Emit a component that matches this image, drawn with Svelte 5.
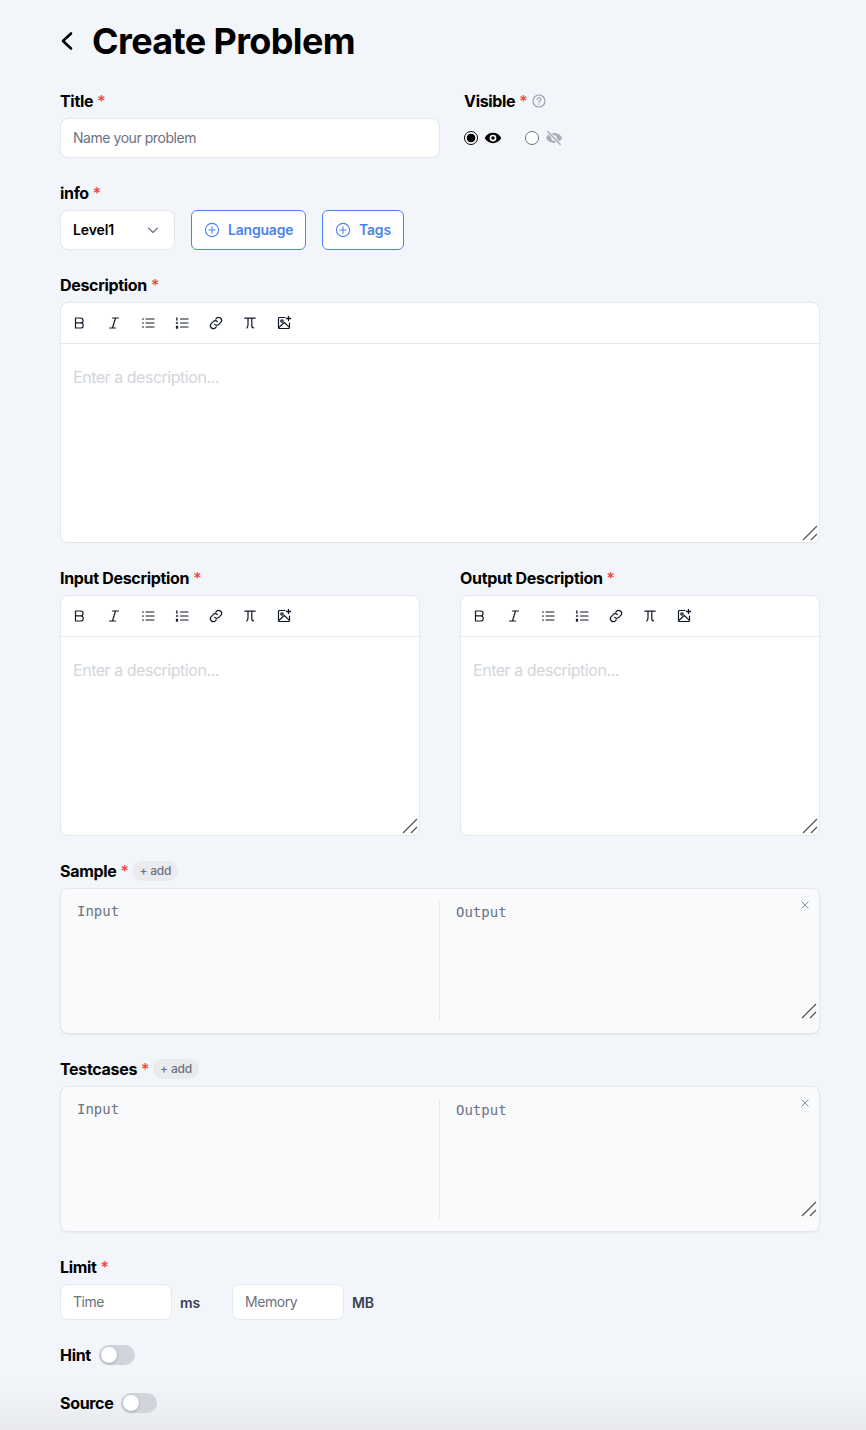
<script>
  const tools = ['b', 'i', 'ul', 'ol', 'link', 'pi', 'img'];
</script>

{#snippet req()}<span class="req">*</span>{/snippet}

{#snippet grip(cls)}
  <svg class="grip {cls}" width="16" height="16" viewBox="0 0 16 16" aria-hidden="true">
    <path d="M1 15 15 1M9 15l6-6" fill="none" stroke="#555" stroke-width="1.3" />
  </svg>
{/snippet}

{#snippet tool(kind)}
  <button class="tool" type="button" aria-label={kind}>
    <svg width="16" height="16" viewBox="0 0 16 16" fill="none" stroke="#111827" stroke-width="1.2" stroke-linecap="round" stroke-linejoin="round">
      {#if kind === 'b'}
        <path d="M3.500 3h5.100a2.400 2.400 0 0 1 0 4.900H3.500zM3.500 7.900h5.700a2.600 2.600 0 0 1 0 5.100H3.500z" />
      {:else if kind === 'i'}
        <path d="M6.500 3h6M3.500 13h6M9.600 3 6.400 13" />
      {:else if kind === 'ul'}
        <path d="M6 4h8M6 8h8M6 12h8" />
        <path d="M2.500 4h1M2.500 8h1M2.500 12h1" />
      {:else if kind === 'ol'}
        <path d="M6.500 4H14M6.500 8H14M6.500 12H14" />
        <path d="M2.900 3v2.200M2.400 8h1.200M2.400 11.500h1.200M2.400 13h1.200" stroke-width="1.300" />
      {:else if kind === 'link'}
        <path d="M6.600 9.400a2.900 2.900 0 0 0 4.200 0l2.200-2.200A3 3 0 0 0 8.800 3l-1 1" />
        <path d="M9.400 6.600a2.900 2.900 0 0 0-4.200 0L3 8.800A3 3 0 0 0 7.200 13l1-1" />
      {:else if kind === 'pi'}
        <path d="M2.800 3.200h10.400M6 3.200v6.200c0 1.800-.4 3-1.200 3.600M9.800 3.200v7.600c0 1.300.6 2 1.800 2" />
      {:else}
        <path d="M9 2.500H3.500a1 1 0 0 0-1 1v9a1 1 0 0 0 1 1h9a1 1 0 0 0 1-1V8" />
        <circle cx="6" cy="6" r="1.200" />
        <path d="m2.800 12.500 5.500-5 4.900 4.600" />
        <path d="M12.500 1.500v4M10.500 3.500h4" stroke-width="1.300" />
      {/if}
    </svg>
  </button>
{/snippet}

{#snippet editor()}
  <div class="editor">
    <div class="toolbar">
      {#each tools as t}{@render tool(t)}{/each}
    </div>
    <div class="editor-body">Enter a description...</div>
    {@render grip('grip-editor')}
  </div>
{/snippet}

{#snippet pair()}
  <div class="pair">
    <textarea class="pair-in" placeholder="Input"></textarea>
    <textarea class="pair-out" placeholder="Output"></textarea>
    <svg class="close" width="10" height="10" viewBox="0 0 10 10" aria-hidden="true">
      <path d="M1.500 1.500l7 7M8.500 1.500l-7 7" stroke="#8b919c" stroke-width="1" fill="none" />
    </svg>
    {@render grip('grip-pair')}
  </div>
{/snippet}

{#snippet plus()}
  <svg width="16" height="16" viewBox="0 0 16 16" fill="none" stroke="#4c82f0" stroke-width="1.100" stroke-linecap="round">
    <circle cx="8" cy="8" r="6.600" /><path d="M8 4.800v6.400M4.800 8h6.400" />
  </svg>
{/snippet}

<main class="page">
  <header class="head">
    <svg class="back" width="16" height="24" viewBox="0 0 16 24" fill="none" stroke="#000" stroke-width="2.600" stroke-linecap="round" stroke-linejoin="round">
      <path d="M12 4.500 4 12l8 7.500" />
    </svg>
    <h1>Create Problem</h1>
  </header>

  <div class="row-title">
    <div class="field title-field">
      <span class="label">Title {@render req()}</span>
      <input class="input wide" placeholder="Name your problem" />
    </div>
    <div class="field">
      <span class="label">Visible {@render req()}
        <svg class="help" width="14" height="14" viewBox="0 0 14 14" fill="none" stroke="#9ca3af" stroke-width="1.200" stroke-linecap="round">
          <circle cx="7" cy="7" r="6" />
          <path d="M5.300 5.500a1.750 1.750 0 1 1 2.600 1.500c-.6.350-.9.700-.9 1.300" />
          <path d="M7 10.200v.1" />
        </svg>
      </span>
      <div class="radios">
        <span class="radio on"></span>
        <svg class="eye" width="18" height="18" viewBox="0 0 16 16">
          <path d="M.6 8C2.200 5 4.900 3.400 8 3.400S13.800 5 15.400 8c-1.600 3-4.300 4.600-7.400 4.600S2.200 11 .6 8z" fill="#000" />
          <circle cx="8" cy="8" r="3" fill="#fff" /><circle cx="8" cy="8" r="1.600" fill="#000" />
        </svg>
        <span class="radio off"></span>
        <svg class="eye" width="18" height="18" viewBox="0 0 16 16" fill="none">
          <path d="M.8 8C2.300 5.200 4.900 3.600 8 3.600S13.700 5.200 15.200 8c-1.500 2.800-4.100 4.400-7.200 4.400S2.300 10.800.8 8z" fill="#a9aeb8" />
          <circle cx="8" cy="8" r="2.400" fill="#f2f5fa" />
          <path d="M2.500 2.200 13.500 13.800" stroke="#f2f5fa" stroke-width="2.800" />
          <path d="M2.500 2.200 13.500 13.800" stroke="#a9aeb8" stroke-width="1.300" stroke-linecap="round" />
        </svg>
      </div>
    </div>
  </div>

  <div class="field">
    <span class="label">info {@render req()}</span>
    <div class="info-row">
      <div class="select">
        <span>Level1</span>
        <svg width="12" height="12" viewBox="0 0 12 12" fill="none" stroke="#6b7280" stroke-width="1.100" stroke-linecap="round" stroke-linejoin="round"><path d="M1.500 4 6 8.500 10.500 4" /></svg>
      </div>
      <button class="outline lang" type="button">{@render plus()}<span>Language</span></button>
      <button class="outline tags" type="button">{@render plus()}<span>Tags</span></button>
    </div>
  </div>

  <div class="field">
    <span class="label">Description {@render req()}</span>
    {@render editor()}
  </div>

  <div class="two">
    <div class="field">
      <span class="label">Input Description {@render req()}</span>
      {@render editor()}
    </div>
    <div class="field">
      <span class="label">Output Description {@render req()}</span>
      {@render editor()}
    </div>
  </div>

  <div class="field">
    <span class="label">Sample {@render req()} <span class="add">+ add</span></span>
    {@render pair()}
  </div>

  <div class="field">
    <span class="label">Testcases {@render req()} <span class="add">+ add</span></span>
    {@render pair()}
  </div>

  <div class="field">
    <span class="label">Limit {@render req()}</span>
    <div class="limit-row">
      <input class="input small" placeholder="Time" /><span class="unit unit-ms">ms</span>
      <input class="input small" placeholder="Memory" /><span class="unit">MB</span>
    </div>
  </div>

  <div class="switch-row"><span class="label">Hint</span><span class="switch"><span class="knob"></span></span></div>
  <div class="switch-row source"><span class="label">Source</span><span class="switch"><span class="knob"></span></span></div>
</main>

<style>
  :global(body) {
    margin: 0;
    background: #f2f5fa;
    font-family: Inter, "Liberation Sans", sans-serif;
    color: #000;
    overflow: hidden;
  }
  * { box-sizing: border-box; }
  .page {
    width: 866px;
    height: 1430px;
    padding: 20px 46px 0 60px;
    display: flex;
    flex-direction: column;
    gap: 23px;
    overflow: hidden;
    background: linear-gradient(to bottom, #f2f5fa 1380px, #e8eaee 1430px);
  }
  .head {
    display: flex;
    align-items: center;
    gap: 16px;
    height: 42px;
    margin-bottom: 4px;
  }
  .back { display: block; margin-left: -1px; margin-right: 1px; }
  h1 {
    margin: 0;
    font-size: 36px;
    font-weight: 700;
    line-height: 42px;
    letter-spacing: -0.63px;
  }
  .field { display: flex; flex-direction: column; gap: 5px; min-width: 0; }
  .label {
    display: flex;
    align-items: center;
    gap: 4px;
    height: 24px;
    font-size: 16px;
    font-weight: 700;
    line-height: 24px;
    letter-spacing: -0.32px;
    white-space: nowrap;
  }
  .req { color: #ef4444; font-weight: 500; }
  .row-title { display: flex; gap: 24px; }
  .title-field { width: 380px; }
  .help { margin-left: 1px; }
  .input {
    height: 40px;
    background: #fff;
    border: 1px solid #e5e7eb;
    border-radius: 8px;
    padding: 0 12px 2px;
    font: 400 14px Inter, sans-serif;
    letter-spacing: -0.45px;
    color: #111827;
    outline: none;
  }
  .input::placeholder { color: #6b7280; }
  .wide { width: 100%; }
  .radios { display: flex; align-items: center; height: 40px; }
  .radio {
    width: 14px;
    height: 14px;
    border-radius: 50%;
    background: #fff;
    border: 1px solid #6b7280;
    flex: none;
  }
  .radio.on { border-color: #000; background: radial-gradient(circle, #000 0 4px, #fff 4.6px); }
  .radio.off { margin-left: 23px; }
  .eye { margin-left: 6px; display: block; }
  .info-row { display: flex; gap: 16px; }
  .select {
    width: 115px;
    height: 40px;
    display: flex;
    align-items: center;
    justify-content: space-between;
    padding: 0 15px 0 12px;
    background: #fff;
    border: 1px solid #e5e7eb;
    border-radius: 8px;
    font-size: 14px;
    font-weight: 600;
    letter-spacing: -0.1px;
  }
  .select span { margin-bottom: 1px; }
  .outline {
    height: 40px;
    display: flex;
    align-items: center;
    background: #fff;
    border: 1px solid #4c82f0;
    border-radius: 6px;
    color: #4c82f0;
    font: 600 14px Inter, sans-serif;
    letter-spacing: -0.2px;
    padding: 0 0 2px 12px;
    gap: 8px;
  }
  .outline svg { margin-top: 2px; }
  .lang { width: 115px; }
  .tags { width: 82px; }
  .editor {
    position: relative;
    height: 241px;
    background: #fff;
    border: 1px solid #e5e7eb;
    border-radius: 8px;
  }
  .toolbar {
    height: 41px;
    display: flex;
    align-items: center;
    gap: 10px;
    padding-left: 7px;
    border-bottom: 1px solid #e5e7eb;
  }
  .tool {
    width: 24px;
    height: 24px;
    padding: 0;
    display: grid;
    place-items: center;
    border: 0;
    background: none;
  }
  .editor-body {
    padding: 23px 12px 0;
    font-size: 16px;
    line-height: 20px;
    letter-spacing: -0.47px;
    color: #d1d5db;
  }
  .grip { position: absolute; display: block; }
  .grip-editor { right: 1px; bottom: 1px; }
  .grip-pair { right: 2px; bottom: 14px; }
  .two { display: grid; grid-template-columns: 360px 360px; gap: 40px; }
  .add {
    height: 20px;
    display: inline-flex;
    align-items: center;
    padding: 0 7px;
    border-radius: 10px;
    background: #e9ebef;
    color: #6b7280;
    font-size: 12px;
    font-weight: 500;
    letter-spacing: -0.2px;
  }
  .pair {
    position: relative;
    height: 146px;
    display: flex;
    padding: 12px 0;
    background: #f9fafc;
    border: 1px solid #e5e7eb;
    border-radius: 8px;
    box-shadow: 0 1px 2px rgba(0, 0, 0, 0.06);
  }
  textarea {
    display: block;
    height: 120px;
    border: 0;
    padding: 0 16px;
    background: transparent;
    resize: none;
    outline: none;
    font: 400 14px/20px "DejaVu Sans Mono", monospace;
    color: #111827;
  }
  textarea::placeholder { color: #6b7280; }
  .pair-in { width: 378px; }
  .pair-out {
    flex: 1;
    min-width: 0;
    height: 118px;
    margin-top: 1px;
    border-left: 1px solid #e5e7eb;
  }
  .close { position: absolute; top: 11px; right: 9px; }
  .limit-row { display: flex; align-items: center; }
  .small { width: 112px; height: 36px; }
  .unit { margin-left: 8px; font-size: 14px; font-weight: 600; color: #374151; letter-spacing: -0.1px; }
  .unit-ms { width: 52px; }
  .switch-row { display: flex; align-items: center; gap: 8px; height: 24px; }
  .source { margin-top: 1px; }
  .switch {
    position: relative;
    width: 36px;
    height: 20px;
    border-radius: 10px;
    background: #d1d5db;
  }
  .knob {
    position: absolute;
    top: 2px;
    left: 2px;
    width: 16px;
    height: 16px;
    border-radius: 50%;
    background: #fff;
    box-shadow: 0 1px 3px rgba(0, 0, 0, 0.25);
  }
</style>
